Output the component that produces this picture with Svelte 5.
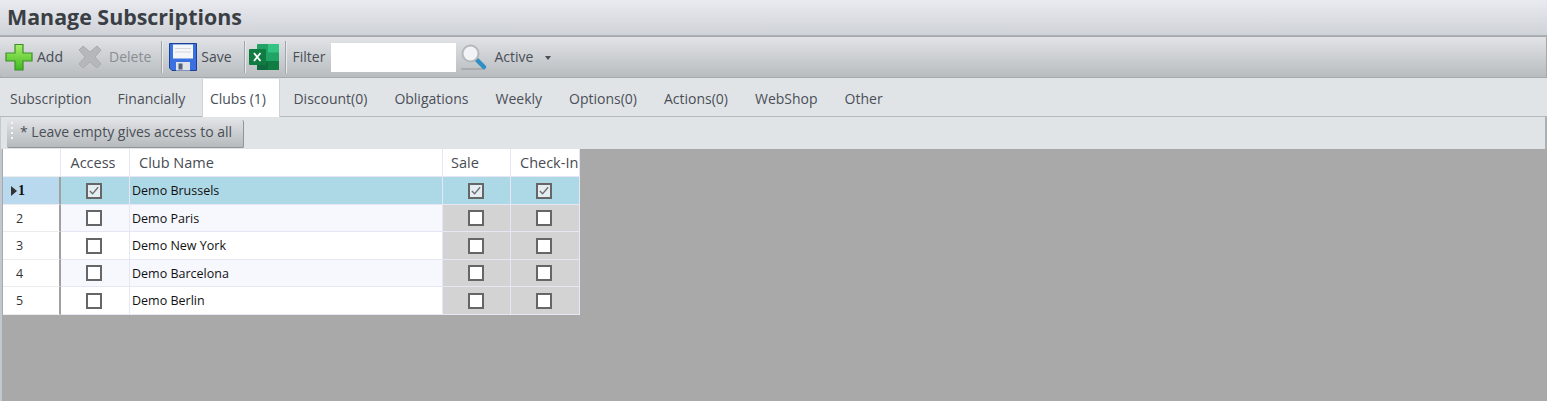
<script>
  const tabs = ['Subscription', 'Financially', 'Clubs (1)', 'Discount(0)', 'Obligations', 'Weekly', 'Options(0)', 'Actions(0)', 'WebShop', 'Other'];
  const activeTab = 'Clubs (1)';

  let clubs = [
    { name: 'Demo Brussels', access: true, sale: true, checkIn: true },
    { name: 'Demo Paris', access: false, sale: false, checkIn: false },
    { name: 'Demo New York', access: false, sale: false, checkIn: false },
    { name: 'Demo Barcelona', access: false, sale: false, checkIn: false },
    { name: 'Demo Berlin', access: false, sale: false, checkIn: false }
  ];
</script>

{#snippet check(on)}
  <span class="check">
    {#if on}
      <svg width="13" height="13" viewBox="0 0 13 13"><path d="M2 7 L5 10 L11 3" fill="none" stroke="#6e6e6e" stroke-width="1.4" /></svg>
    {/if}
  </span>
{/snippet}

<div class="page">
  <header class="title">Manage Subscriptions</header>

  <div class="toolbar">
    <button class="tool first">
      <svg width="28" height="28" viewBox="0 0 28 28">
        <defs>
          <linearGradient id="plus" x1="0" y1="0" x2="0" y2="1">
            <stop offset="0" stop-color="#a8f06a" />
            <stop offset="1" stop-color="#3fb81e" />
          </linearGradient>
        </defs>
        <path d="M10 1.500 H18 V10 H27 V18 H18 V27 H10 V18 H1 V10 H10 Z" fill="url(#plus)" stroke="#3c8f2a" stroke-width="1.200" />
      </svg>
      <span>Add</span>
    </button>
    <button class="tool del">
      <svg width="24" height="24" viewBox="0 0 24 24">
        <path d="M5 1 L12 7 L19 1 L23 5 L17 12 L23 19 L19 23 L12 17 L5 23 L1 19 L7 12 L1 5 Z" fill="#b5b7b8" stroke="#a9abac" stroke-linejoin="round" />
      </svg>
      <span>Delete</span>
    </button>
    <i class="sep first-sep"></i>
    <button class="tool save">
      <svg width="28" height="28" viewBox="0 0 28 28">
        <path d="M0.500 0.500 H27.500 V27.500 H3 L0.500 25 Z" fill="#3a70e0" stroke="#1c3f96" />
        <rect x="4" y="1.500" width="20" height="14" fill="#f4f6f8" />
        <path d="M6 5.500 H22 M6 9 H22" stroke="#d4d8dc" stroke-width="1.200" />
        <rect x="7" y="19" width="14" height="8.500" fill="#dfe3e8" />
        <rect x="9.500" y="20.500" width="4" height="6" fill="#53617a" />
      </svg>
      <span>Save</span>
    </button>
    <i class="sep"></i>
    <button class="tool excel" aria-label="Export to Excel">
      <svg width="32" height="28" viewBox="0 0 32 28">
        <rect x="9" y="1" width="22" height="26" rx="1" fill="#21a366" />
        <rect x="20" y="1" width="11" height="8.700" fill="#33c481" />
        <rect x="20" y="9.700" width="11" height="8.600" fill="#21a366" />
        <rect x="9" y="18.300" width="22" height="8.700" fill="#0f6b3f" />
        <rect x="20" y="18.300" width="11" height="8.700" fill="#107c41" />
        <rect x="1" y="6" width="17" height="16" rx="1" fill="#107c41" />
        <path d="M6 10 L12.500 18 M12.500 10 L6 18" stroke="#fff" stroke-width="1.800" />
      </svg>
    </button>
    <i class="sep"></i>
    <span class="filter">Filter</span>
    <input class="search" type="text" />
    <svg class="glass" width="28" height="28" viewBox="0 0 28 28">
      <rect x="1" y="25" width="24" height="2" fill="#a9adaf" />
      <path d="M16 16 L24 24" stroke="#2f8fc4" stroke-width="4.500" stroke-linecap="round" />
      <circle cx="10.500" cy="10.500" r="8" fill="#f1f3f4" stroke="#b4b8ba" stroke-width="2" />
    </svg>
    <span class="active-label">Active</span>
    <i class="caret"></i>
  </div>

  <nav class="tabs">
    {#each tabs as tab}
      <span class="tab" class:on={tab === activeTab}>{tab}</span>
    {/each}
  </nav>

  <div class="subbar">
    <div class="note"><i class="grip"></i>* Leave empty gives access to all</div>
  </div>

  <div class="canvas">
    <div class="grid">
      <div class="cell head rowhead"></div>
      <div class="cell head center">Access</div>
      <div class="cell head name">Club Name</div>
      <div class="cell head sale-h">Sale</div>
      <div class="cell head checkin-h">Check-In</div>

      {#each clubs as club, i}
        <div class="cell rowhead" class:current={i === 0}>
          {#if i === 0}<i class="pointer"></i><b>1</b>{:else}<span>{i + 1}</span>{/if}
        </div>
        <div class="cell center" class:alt={i % 2 === 1} class:sel={i === 0}>{@render check(club.access)}</div>
        <div class="cell club" class:alt={i % 2 === 1} class:sel={i === 0}>{club.name}</div>
        <div class="cell center off" class:sel={i === 0}>{@render check(club.sale)}</div>
        <div class="cell center off" class:sel={i === 0}>{@render check(club.checkIn)}</div>
      {/each}
    </div>
  </div>
</div>

<style>
  :global(body) {
    margin: 0;
    background: #a9a9a9;
  }

  .page {
    height: 401px;
    display: flex;
    flex-direction: column;
    overflow: hidden;
    font-family: "Open Sans", "Noto Sans", sans-serif;
    font-size: 14px;
    color: #4a4f57;
  }

  .title {
    height: 36px;
    box-sizing: border-box;
    padding: 3px 0 0 7px;
    font-size: 21.4px;
    line-height: 27px;
    font-weight: 700;
    color: #3a3e45;
    background: linear-gradient(#e9ebf0, #cfd2d6);
    border-bottom: 1px solid #a9b2ba;
  }

  .toolbar {
    height: 41px;
    box-sizing: border-box;
    margin-top: 1px;
    margin-right: 1px;
    padding-left: 5px;
    display: flex;
    align-items: center;
    background: linear-gradient(#e1e3e7, #b8bcbf);
    border-bottom: 1px solid #a3a9ae;
    border-radius: 0 0 0 3px;
  }

  .tool {
    display: flex;
    align-items: center;
    gap: 4px;
    padding: 0;
    border: 0;
    background: none;
    font: inherit;
    color: #474c54;
  }

  .tool span,
  .filter,
  .active-label {
    margin-bottom: 2px;
  }

  .del {
    margin-left: 15px;
    gap: 7px;
    color: #8b8e92;
  }

  .save {
    gap: 4px;
  }

  .sep {
    width: 1px;
    height: 32px;
    margin: 0 7px 0 12px;
    background: #9fa4a8;
    box-shadow: 1px 0 0 #e8eaec;
  }

  .first-sep {
    margin-left: 10px;
  }

  .excel {
    margin: 0 -7px 0 -4px;
  }

  .search {
    width: 125px;
    height: 29px;
    box-sizing: border-box;
    margin: 1px 0 0 6px;
    padding: 0;
    border: 0;
    background: #fff;
  }

  .glass {
    margin-left: 4px;
  }

  .active-label {
    margin-left: 6px;
  }

  .caret {
    width: 0;
    height: 0;
    margin: 2px 0 0 12px;
    border: 3.500px solid transparent;
    border-top: 4px solid #4a4f57;
    border-bottom: 0;
  }

  .tabs {
    height: 39px;
    box-sizing: border-box;
    padding: 1px 0 0 0;
    margin-left: -3.500px;
    display: flex;
    background: #e1e4e7;
    border-bottom: 1px solid #b3b9bf;
  }

  .tab {
    padding: 10px 13.500px 0;
    white-space: nowrap;
  }

  .tab:first-child {
    padding-right: 12.500px;
  }

  .tab.on {
    background: #fff;
    margin: 0 0 -1px 3px;
    border: 1px solid #ced2d6;
    border-width: 0 1px;
    padding: 10px 13px 0 7px;
  }

  .subbar {
    height: 32px;
    box-sizing: border-box;
    padding: 3px 0 0 6px;
    background: #e1e4e7;
    border-right: 2px solid #a9b0b6;
    border-left: 1px solid #c4c9ce;
  }

  .note {
    width: 237px;
    height: 28px;
    box-sizing: border-box;
    display: flex;
    align-items: center;
    gap: 7px;
    padding: 0 0 4px 4px;
    background: linear-gradient(#dfe1e4, #b6babd);
    border-right: 1px solid #8f9499;
    border-bottom: 1px solid #8f9499;
    border-radius: 2px;
    white-space: nowrap;
  }

  .grip {
    width: 2px;
    height: 20px;
    background: repeating-linear-gradient(#f4f5f6 0 2px, transparent 2px 5px);
  }

  .canvas {
    flex: 1;
    background: #a9a9a9;
    border-left: 2px solid #c2c8d0;
  }

  .grid {
    width: 577px;
    margin-left: 1px;
    display: grid;
    grid-template-columns: 58px 69px 313px 68px 69px;
    grid-template-rows: 28px 28px 27px 28px 27px 28px;
    background: #fff;
    overflow: hidden;
    font-size: 12.5px;
    color: #111;
  }

  .cell {
    box-sizing: border-box;
    display: flex;
    align-items: center;
    border-right: 1px solid #e6e6f5;
    border-bottom: 1px solid #e6e6f5;
    background: #fff;
    white-space: nowrap;
    overflow: hidden;
  }

  .head {
    font-size: 14.5px;
    color: #474c54;
  }

  .name {
    padding-left: 9px;
  }

  .sale-h {
    padding-left: 8px;
  }

  .checkin-h {
    padding-left: 9px;
  }

  .center {
    justify-content: center;
    padding-right: 2px;
  }

  .head.center {
    padding-right: 4px;
  }

  .club {
    padding-left: 2px;
  }

  .alt {
    background: #f7f7fe;
  }

  .off {
    background: #d3d3d3;
  }

  .sel {
    background: #add8e6;
  }

  .rowhead {
    border-right: 2px solid #a0a0a0;
    padding-left: 13px;
    border-bottom-color: #ececec;
    color: #333;
    font-size: 12.5px;
  }

  .rowhead.head {
    border-right: 1px solid #e6e6f5;
  }

  .rowhead.current {
    background: #b9d9ef;
    padding-left: 8px;
    font-family: "Liberation Serif", serif;
    font-size: 14px;
    color: #111;
  }

  .pointer {
    width: 0;
    height: 0;
    border: 5px solid transparent;
    border-left: 6px solid #333;
    border-right: 0;
    margin-right: 1px;
  }

  .check {
    width: 16px;
    height: 16px;
    box-sizing: border-box;
    display: flex;
    align-items: center;
    justify-content: center;
    border: 2px solid #666;
    background: #fff;
  }

  .sel .check {
    background: #e4eef2;
  }
</style>
